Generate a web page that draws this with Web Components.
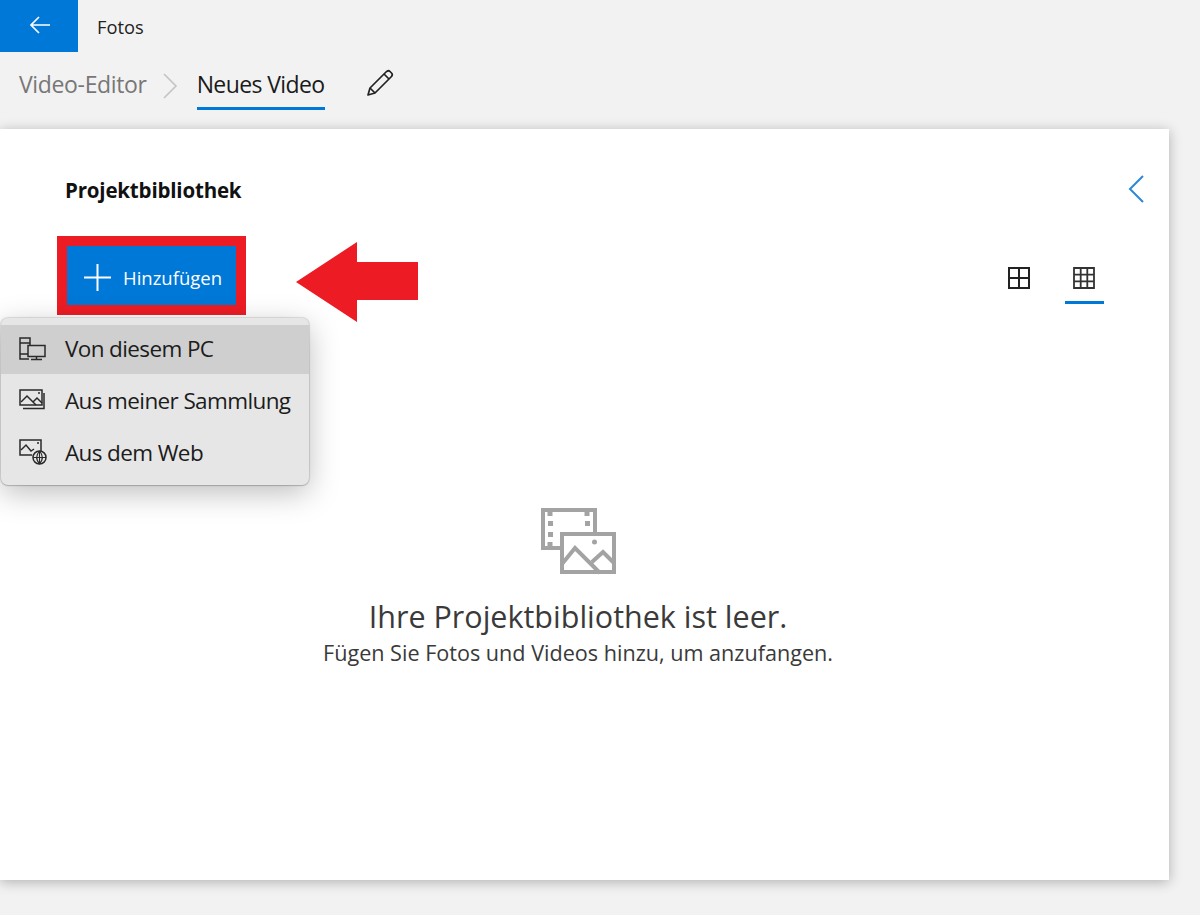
<!DOCTYPE html>
<html lang="de">
<head>
<meta charset="utf-8">
<title>Fotos</title>
<style>
  html, body {
    background: #f2f2f2;
    height: 915px;
    margin: 0;
    overflow: hidden;
  }

  body {
    color: #1a1a1a;
    font-family: "Open Sans", "Noto Sans", sans-serif;
  }
</style>
</head>
<body>
<app-titlebar>Fotos</app-titlebar>
<app-breadcrumb parent="Video-Editor" current="Neues Video"></app-breadcrumb>
<library-panel></library-panel>

<script>
class AppTitlebar extends HTMLElement {
  constructor() {
    super();
    this.attachShadow( {mode: 'open'} );
    this.shadowRoot.innerHTML = /* template */ `
      <style>
        :host {
          align-items: center;
          display: flex;
          height: 52px;
        }

        button {
          align-items: center;
          background: #0078d7;
          border: 0;
          display: flex;
          height: 52px;
          justify-content: center;
          padding: 0 0 3px 1px;
          width: 78px;
        }

        span {
          color: #222;
          font-size: 18.300px;
          margin-left: 19px;
          margin-top: 1px;
        }
      </style>
      <button aria-label="Zurück">
        <svg width="22" height="20" viewBox="0 0 22 20" fill="none" stroke="#fff" stroke-width="1.7">
          <path d="M21 10H2M10 2L2 10l8 8"/>
        </svg>
      </button>
      <span><slot></slot></span>
    `;
  }
}

class AppBreadcrumb extends HTMLElement {
  constructor() {
    super();
    this.attachShadow( {mode: 'open'} );
    this.shadowRoot.innerHTML = /* template */ `
      <style>
        :host {
          align-items: flex-start;
          display: flex;
          height: 77px;
          padding-left: 19px;
        }

        p {
          font-size: 23px;
          line-height: 32px;
          margin: 16px 0 0 0;
          white-space: nowrap;
        }

        .parent {
          color: #777;
          letter-spacing: -0.35px;
        }

        .current {
          border-bottom: 3px solid #0078d7;
          color: #1a1a1a;
          height: 39px;
          letter-spacing: -0.6px;
        }

        svg {
          flex: none;
        }

        .chev {
          margin: 21px 18px 0 15px;
        }

        .pen {
          margin: 17px 0 0 41px;
        }
      </style>
      <p class="parent"></p>
      <svg class="chev" width="17" height="26" viewBox="0 0 17 26" fill="none" stroke="#c4c4c4" stroke-width="1.6">
        <path d="M2 1l12 12L2 25"/>
      </svg>
      <p class="current"></p>
      <svg class="pen" width="28" height="28" viewBox="0 0 28 28" fill="none" stroke="#222" stroke-width="1.7" stroke-linejoin="round">
        <path d="M2 26l2-7L20 3c1.500-1.500 3-1.500 4 -.5l1.500 1.500c1 1 1 2.500-.5 4L9 24z"/>
        <path d="M4 19l5 5M18 5l5 5"/>
      </svg>
    `;
    this.shadowRoot.querySelector( '.parent' ).textContent = this.getAttribute( 'parent' );
    this.shadowRoot.querySelector( '.current' ).textContent = this.getAttribute( 'current' );
  }
}

class AddButton extends HTMLElement {
  constructor() {
    super();
    this.attachShadow( {mode: 'open'} );
    this.shadowRoot.innerHTML = /* template */ `
      <style>
        :host {
          align-items: center;
          background: #0078d7;
          border: 10px solid #ed1c24;
          box-sizing: border-box;
          color: #fff;
          display: flex;
          font-size: 18.500px;
          height: 79px;
          padding: 4px 0 0 17px;
          width: 189px;
        }

        svg {
          margin-right: 12px;
        }
      </style>
      <svg width="27" height="27" viewBox="0 0 27 27" stroke="#fff" stroke-width="2">
        <path d="M13.500 0v27M0 13.500h27"/>
      </svg>
      <slot></slot>
    `;
  }
}

class MenuItem extends HTMLElement {
  constructor() {
    super();
    this.attachShadow( {mode: 'open'} );
    this.shadowRoot.innerHTML = /* template */ `
      <style>
        :host {
          align-items: center;
          box-sizing: border-box;
          color: #1c1c1c;
          display: flex;
          font-size: 22.500px;
          height: 52px;
          letter-spacing: -0.62px;
          padding: 0 0 2px 18px;
          white-space: nowrap;
        }

        :host( [active] ) {
          background: #cfcfcf;
          height: 49px;
          margin-bottom: 1px;
        }

        ::slotted( svg ) {
          flex: none;
          margin-right: 18px;
        }
      </style>
      <slot name="icon"></slot>
      <slot></slot>
    `;
  }
}

class AddMenu extends HTMLElement {
  constructor() {
    super();
    this.attachShadow( {mode: 'open'} );
    this.shadowRoot.innerHTML = /* template */ `
      <style>
        :host {
          background: #e6e6e6;
          border-radius: 7px;
          box-shadow: 0 0 1px 1px rgba( 0, 0, 0, 0.12 ), 0 1px 1px rgba( 0, 0, 0, 0.12 ), 0 8px 30px rgba( 0, 0, 0, 0.26 );
          box-sizing: border-box;
          display: block;
          height: 167px;
          left: 1px;
          overflow: hidden;
          padding-top: 7px;
          position: absolute;
          top: 189px;
          width: 308px;
        }
      </style>
      <slot></slot>
    `;
  }
}

class EmptyState extends HTMLElement {
  constructor() {
    super();
    this.attachShadow( {mode: 'open'} );
    this.shadowRoot.innerHTML = /* template */ `
      <style>
        :host {
          align-items: center;
          display: flex;
          flex-direction: column;
          margin-top: 192px;
          padding-right: 13px;
        }

        svg {
          display: block;
        }

        h2 {
          color: #3a3a3a;
          font-size: 30.500px;
          font-weight: 400;
          line-height: 40px;
          margin: 21px 0 0 0;
        }

        p {
          color: #3a3a3a;
          font-size: 21.600px;
          line-height: 30px;
          margin: 2px 0 0 0;
        }
      </style>
      <svg width="77" height="68" viewBox="0 0 77 68" fill="none" stroke="#a3a3a3" stroke-width="4">
        <path d="M20 41H3V3h52v24"/>
        <path d="M10 3v6M47 3v6M10 35v6" stroke-width="5"/>
        <rect x="8" y="14" width="5" height="5" fill="#a3a3a3" stroke="none"/>
        <rect x="8" y="25" width="5" height="5" fill="#a3a3a3" stroke="none"/>
        <rect x="45" y="14" width="5" height="5" fill="#a3a3a3" stroke="none"/>
        <rect x="22" y="27" width="52" height="38"/>
        <path d="M22 57l13-16 25 25M52 55l11-10 11 11"/>
        <circle cx="54.500" cy="35" r="2.500" fill="#a3a3a3" stroke="none"/>
      </svg>
      <h2><slot name="title"></slot></h2>
      <p><slot></slot></p>
    `;
  }
}

class LibraryPanel extends HTMLElement {
  constructor() {
    super();
    this.attachShadow( {mode: 'open'} );
    this.shadowRoot.innerHTML = /* template */ `
      <style>
        :host {
          background: #fff;
          box-shadow: 0 2px 12px rgba( 0, 0, 0, 0.28 );
          box-sizing: border-box;
          display: block;
          height: 751px;
          position: relative;
          width: 1169px;
        }

        header {
          align-items: center;
          box-sizing: border-box;
          display: flex;
          height: 107px;
          justify-content: space-between;
          padding: 15px 23px 0 65px;
        }

        header svg {
          margin-bottom: 2px;
        }

        h1 {
          color: #111;
          font-size: 20.500px;
          font-weight: 700;
          letter-spacing: -0.18px;
          margin: 0;
        }

        .tools {
          align-items: flex-start;
          display: flex;
          justify-content: space-between;
          padding: 0 65px 0 57px;
        }

        .views {
          align-items: flex-start;
          display: flex;
          gap: 26px;
          margin-top: 31px;
        }

        .view {
          box-sizing: border-box;
          display: flex;
          height: 37px;
          justify-content: center;
          width: 39px;
        }

        .view svg {
          margin-right: 2px;
        }

        .view.on {
          border-bottom: 3px solid #0078d7;
        }

        .arrow {
          left: 296px;
          position: absolute;
          top: 113px;
        }
      </style>
      <header>
        <h1>Projektbibliothek</h1>
        <svg width="20" height="28" viewBox="0 0 20 28" fill="none" stroke="#2b88d8" stroke-width="2">
          <path d="M17 1L4 14l13 13"/>
        </svg>
      </header>
      <div class="tools">
        <add-button>Hinzufügen</add-button>
        <div class="views">
          <div class="view">
            <svg width="22" height="22" viewBox="0 0 22 22" fill="none" stroke="#222" stroke-width="2">
              <path d="M1 1h20v20H1zM11 1v20M1 11h20"/>
            </svg>
          </div>
          <div class="view on">
            <svg width="22" height="22" viewBox="0 0 22 22" fill="none" stroke="#333" stroke-width="1.8">
              <path d="M1 1h20v20H1zM7.700 1v20M14.300 1v20M1 7.700h20M1 14.300h20"/>
            </svg>
          </div>
        </div>
      </div>
      <empty-state>
        <span slot="title">Ihre Projektbibliothek ist leer.</span>
        Fügen Sie Fotos und Videos hinzu, um anzufangen.
      </empty-state>
      <svg class="arrow" width="122" height="80" viewBox="0 0 122 80">
        <path fill="#ed1c24" d="M0 40L61 0v20h61v38H61v22z"/>
      </svg>
      <add-menu>
        <menu-item active>
          <svg slot="icon" width="28" height="24" viewBox="0 0 28 24" fill="none" stroke="#2a2a2a" stroke-width="1.500">
            <path d="M10 22H1V1h10v7M1 6h10M1 17h8"/>
            <path d="M9 8.500h17v11H9zM17.500 19.500v3M12 22.500h11"/>
          </svg>
          Von diesem PC
        </menu-item>
        <menu-item>
          <svg slot="icon" width="28" height="24" viewBox="0 0 28 24" fill="none" stroke="#2a2a2a" stroke-width="1.500">
            <path d="M1 2h22v15H1zM4 20.500h21V5"/>
            <path d="M2 14l6-6 9 9M14 14l4-4 5 5"/>
            <path d="M19 5h2"/>
          </svg>
          Aus meiner Sammlung
        </menu-item>
        <menu-item>
          <svg slot="icon" width="28" height="26" viewBox="0 0 28 26" fill="none" stroke="#2a2a2a" stroke-width="1.500">
            <path d="M13 16H1V1h21v11"/>
            <path d="M2 11l5-5 5 6 3-2M18 4h2"/>
            <circle cx="20.500" cy="18.500" r="6.500"/>
            <path d="M14 18.500h13M20.500 12v13M20.500 12c-3.500 4-3.500 9 0 13M20.500 12c3.500 4 3.500 9 0 13" stroke-width="1.100"/>
          </svg>
          Aus dem Web
        </menu-item>
      </add-menu>
    `;
  }
}

window.customElements.define( 'app-titlebar', AppTitlebar );
window.customElements.define( 'app-breadcrumb', AppBreadcrumb );
window.customElements.define( 'add-button', AddButton );
window.customElements.define( 'menu-item', MenuItem );
window.customElements.define( 'add-menu', AddMenu );
window.customElements.define( 'empty-state', EmptyState );
window.customElements.define( 'library-panel', LibraryPanel );
</script>
</body>
</html>
